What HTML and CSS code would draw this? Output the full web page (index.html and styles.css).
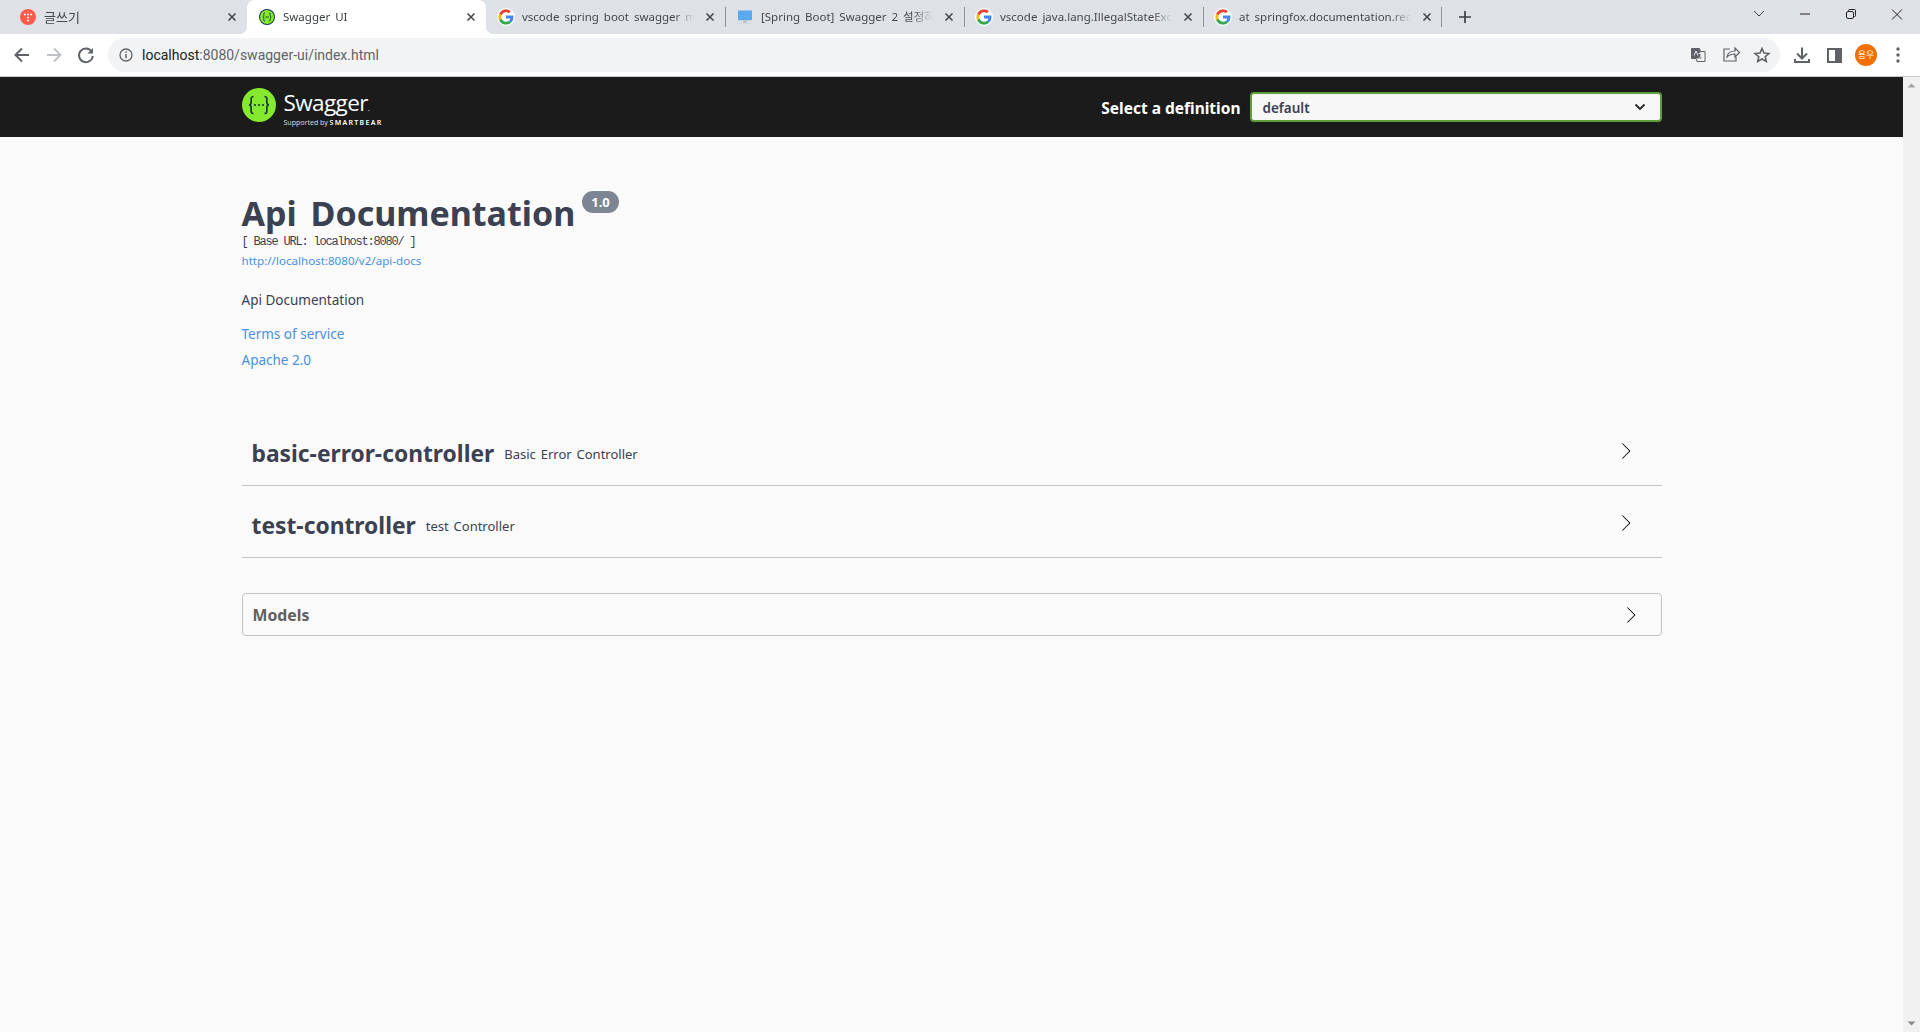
FILE: index.html
```html
<!DOCTYPE html>
<html lang="en">
<head>
    <meta charset="UTF-8">
    <title>Swagger UI</title>
    <link rel="stylesheet" href="styles.css">
</head>
<body>
    <div class="tabstrip">
        <div class="tab">
            <span class="fav fav-tistory">
                <svg width="16" height="16" viewBox="0 0 16 16"><circle cx="8" cy="8" r="8" fill="#ff5a4a"/><g fill="#fff"><circle cx="4.8" cy="5.5" r="1"/><circle cx="8" cy="5.5" r="1"/><circle cx="11.2" cy="5.5" r="1"/><circle cx="8" cy="8.5" r="1"/><circle cx="8" cy="11.5" r="1"/></g></svg>
            </span>
            <span class="tab-title tab-title-ko">글쓰기</span>
            <svg class="tab-close" width="10" height="10" viewBox="0 0 10 10"><path d="M1.5 1.5l7 7M8.5 1.5l-7 7" stroke="#45484d" stroke-width="1.6"/></svg>
        </div>
        <div class="tab active">
            <span class="fav">
                <svg width="16" height="16" viewBox="0 0 16 16"><circle cx="8" cy="8" r="8" fill="#173647"/><circle cx="8" cy="8" r="7" fill="#85ea2d"/><path d="M6 3.8c-1.6 0-1.2 1.700-1.200 2.800 0 .8-.6 1.400-1 1.400.4 0 1 .6 1 1.400 0 1.100-.4 2.800 1.200 2.800M10 3.800c1.600 0 1.200 1.700 1.200 2.800 0 .8.6 1.400 1 1.400-.4 0-1 .6-1 1.400 0 1.100.4 2.800-1.200 2.800M6.200 8h3.600" fill="none" stroke="#173647" stroke-width=".9"/></svg>
            </span>
            <span class="tab-title">Swagger UI</span>
            <svg class="tab-close" width="10" height="10" viewBox="0 0 10 10"><path d="M1.5 1.5l7 7M8.5 1.5l-7 7" stroke="#45484d" stroke-width="1.6"/></svg>
        </div>
        <div class="tab sep">
            <span class="fav fav-google">
                <svg width="16" height="16" viewBox="0 0 48 48"><path fill="#ea4335" d="M24 9.500c3.900 0 6.700 1.700 8.300 3.100l6.100-5.900C34.600 3.200 29.800 1 24 1 15 1 7.300 6.200 3.500 13.700l7.100 5.500C12.400 13.600 17.700 9.500 24 9.500z"/><path fill="#4285f4" d="M46.500 24.500c0-1.900-.2-3.300-.5-4.700H24v8.500h12.900c-.3 2.100-1.700 5.300-4.700 7.400l6.900 5.300c4.600-4.200 7.400-10.400 7.400-16.500z"/><path fill="#fbbc05" d="M10.600 28.800c-.5-1.500-.8-3.100-.8-4.800s.3-3.300.8-4.800l-7.100-5.500C2 16.700 1 20.200 1 24s1 7.300 2.500 10.300l7.100-5.500z"/><path fill="#34a853" d="M24 47c6.200 0 11.400-2 15.100-5.600l-6.900-5.300c-2 1.300-4.500 2.300-8.200 2.300-6.300 0-11.600-4.100-13.400-9.700l-7.100 5.500C7.300 41.800 15 47 24 47z"/></svg>
            </span>
            <span class="tab-title">vscode spring boot swagger maven</span>
            <svg class="tab-close" width="10" height="10" viewBox="0 0 10 10"><path d="M1.500 1.500l7 7M8.500 1.500l-7 7" stroke="#45484d" stroke-width="1.6"/></svg>
        </div>
        <div class="tab sep">
            <span class="fav">
                <svg width="16" height="16" viewBox="0 0 16 16"><rect x="1" y="1.500" width="14" height="9.500" fill="#5aa9ec"/><rect x="1" y="11" width="14" height="1" fill="#c5d3de"/><rect x="6" y="12" width="4" height="1.500" fill="#aab7c2"/><rect x="1" y="14" width="14" height="1" fill="#d0d7dd"/></svg>
            </span>
            <span class="tab-title">[Spring Boot] Swagger 2 설정하기</span>
            <svg class="tab-close" width="10" height="10" viewBox="0 0 10 10"><path d="M1.500 1.500l7 7M8.500 1.500l-7 7" stroke="#45484d" stroke-width="1.6"/></svg>
        </div>
        <div class="tab sep">
            <span class="fav fav-google">
                <svg width="16" height="16" viewBox="0 0 48 48"><path fill="#ea4335" d="M24 9.500c3.900 0 6.700 1.700 8.300 3.100l6.100-5.900C34.600 3.200 29.800 1 24 1 15 1 7.300 6.200 3.500 13.700l7.100 5.500C12.400 13.600 17.700 9.500 24 9.500z"/><path fill="#4285f4" d="M46.500 24.500c0-1.900-.2-3.300-.5-4.700H24v8.500h12.900c-.3 2.100-1.700 5.300-4.700 7.400l6.900 5.300c4.600-4.200 7.400-10.400 7.400-16.500z"/><path fill="#fbbc05" d="M10.600 28.800c-.5-1.500-.8-3.100-.8-4.800s.3-3.300.8-4.800l-7.100-5.500C2 16.700 1 20.200 1 24s1 7.300 2.500 10.300l7.100-5.500z"/><path fill="#34a853" d="M24 47c6.200 0 11.400-2 15.100-5.600l-6.900-5.300c-2 1.300-4.500 2.300-8.200 2.300-6.300 0-11.600-4.100-13.400-9.700l-7.100 5.500C7.300 41.800 15 47 24 47z"/></svg>
            </span>
            <span class="tab-title">vscode java.lang.IllegalStateException</span>
            <svg class="tab-close" width="10" height="10" viewBox="0 0 10 10"><path d="M1.500 1.500l7 7M8.500 1.500l-7 7" stroke="#45484d" stroke-width="1.6"/></svg>
        </div>
        <div class="tab sep sep-end">
            <span class="fav fav-google">
                <svg width="16" height="16" viewBox="0 0 48 48"><path fill="#ea4335" d="M24 9.500c3.900 0 6.700 1.700 8.300 3.100l6.100-5.900C34.600 3.200 29.800 1 24 1 15 1 7.300 6.200 3.500 13.700l7.100 5.500C12.400 13.600 17.700 9.500 24 9.500z"/><path fill="#4285f4" d="M46.500 24.500c0-1.900-.2-3.300-.5-4.700H24v8.500h12.900c-.3 2.100-1.700 5.300-4.700 7.400l6.900 5.300c4.600-4.200 7.400-10.400 7.400-16.500z"/><path fill="#fbbc05" d="M10.600 28.800c-.5-1.500-.8-3.100-.8-4.800s.3-3.300.8-4.800l-7.100-5.500C2 16.700 1 20.200 1 24s1 7.300 2.500 10.300l7.100-5.500z"/><path fill="#34a853" d="M24 47c6.200 0 11.400-2 15.100-5.600l-6.900-5.300c-2 1.300-4.500 2.300-8.200 2.300-6.300 0-11.600-4.100-13.400-9.700l-7.100 5.500C7.300 41.800 15 47 24 47z"/></svg>
            </span>
            <span class="tab-title">at springfox.documentation.request</span>
            <svg class="tab-close" width="10" height="10" viewBox="0 0 10 10"><path d="M1.500 1.500l7 7M8.500 1.500l-7 7" stroke="#45484d" stroke-width="1.6"/></svg>
        </div>
        <svg class="new-tab" width="12" height="12" viewBox="0 0 12 12"><path d="M6 0v12M0 6h12" stroke="#3c4043" stroke-width="1.700"/></svg>
        <div class="win-controls">
            <svg width="46" height="28" viewBox="0 0 46 28"><path d="M18 11l5 5 5-5" fill="none" stroke="#3c4043" stroke-width="1"/></svg>
            <svg width="46" height="28" viewBox="0 0 46 28"><path d="M18 14h10" stroke="#222" stroke-width="1"/></svg>
            <svg width="46" height="28" viewBox="0 0 46 28"><rect x="18.500" y="11.500" width="7" height="7" rx="1.500" fill="none" stroke="#222"/><path d="M20.500 11.500v-1a1 1 0 0 1 1-1h5a1 1 0 0 1 1 1v5a1 1 0 0 1-1 1h-1" fill="none" stroke="#222"/></svg>
            <svg width="46" height="28" viewBox="0 0 46 28"><path d="M18 9.500l10 10M28 9.500l-10 10" stroke="#222" stroke-width="1"/></svg>
        </div>
    </div>

    <div class="toolbar">
        <svg class="tool-btn" width="32" height="32" viewBox="0 0 32 32"><path d="M23 16H10M16 9.500L9.500 16l6.500 6.500" fill="none" stroke="#5f6368" stroke-width="2"/></svg>
        <svg class="tool-btn" width="32" height="32" viewBox="0 0 32 32"><path d="M9 16h13M16 9.500l6.500 6.500-6.500 6.500" fill="none" stroke="#bdc1c6" stroke-width="2"/></svg>
        <svg class="tool-btn" width="32" height="32" viewBox="0 0 32 32"><path d="M21.700 12.500A6.900 6.900 0 1 0 22.800 17" fill="none" stroke="#5f6368" stroke-width="2"/><path d="M23 9v5.500h-5.500z" fill="#5f6368"/></svg>
        <div class="omnibox">
            <svg class="omni-info" width="14" height="14" viewBox="0 0 14 14"><circle cx="7" cy="7" r="6" fill="none" stroke="#5f6368" stroke-width="1.300"/><path d="M7 6v4.200" stroke="#5f6368" stroke-width="1.500"/><circle cx="7" cy="4.100" r=".9" fill="#5f6368"/></svg>
            <span class="url"><span class="url-host">localhost</span>:8080/swagger-ui/index.html</span>
            <div class="omni-icons">
                <svg width="32" height="32" viewBox="0 0 32 32"><path d="M9.500 9.500h8l1 3h4.500v10h-8l-1-3H9.500z" fill="none" stroke="#5f6368" stroke-width="1"/><path d="M9.500 9.500h8l2 10H9.500z" fill="#5f6368"/><path d="M12 16.500l2-4.500 2 4.500M16.500 14.500h5M19 14.500c0 3-1.500 5-3 6" fill="none" stroke="#f1f3f4" stroke-width=".9"/></svg>
                <svg width="32" height="32" viewBox="0 0 32 32"><path d="M16 10H10v12h12v-4" fill="none" stroke="#5f6368" stroke-width="1.200"/><path d="M13 18c.5-4 3.500-6 8-6V9l4.500 4.500L21 18v-3c-3.500 0-6 1-8 3z" fill="none" stroke="#5f6368" stroke-width="1.200"/></svg>
                <svg width="32" height="32" viewBox="0 0 32 32"><path d="M16 9.500l2 4.500 4.900.5-3.700 3.200 1.100 4.800-4.300-2.500-4.300 2.500 1.100-4.800-3.700-3.200 4.900-.5z" fill="none" stroke="#5f6368" stroke-width="1.600"/></svg>
            </div>
        </div>
        <svg class="tool-btn" width="32" height="32" viewBox="0 0 32 32"><path d="M16 8.500v11M11 14.500l5 5 5-5M9 20v3h14v-3" fill="none" stroke="#5f6368" stroke-width="2"/></svg>
        <svg class="tool-btn" width="32" height="32" viewBox="0 0 32 32"><rect x="10" y="10" width="13" height="13" fill="none" stroke="#5f6368" stroke-width="2"/><rect x="17" y="10" width="6" height="13" fill="#5f6368"/></svg>
        <span class="avatar-wrap"><span class="avatar">용우</span></span>
        <svg class="tool-btn" width="32" height="32" viewBox="0 0 32 32"><circle cx="16" cy="10" r="1.700" fill="#5f6368"/><circle cx="16" cy="16" r="1.700" fill="#5f6368"/><circle cx="16" cy="22" r="1.700" fill="#5f6368"/></svg>
    </div>

    <div class="viewport">
        <div class="page">
            <div class="topbar">
                <div class="wrapper topbar-inner">
                    <div class="logo">
                        <svg width="34" height="34" viewBox="0 0 34 34"><circle cx="17" cy="17" r="17" fill="#85ea2d"/><path d="M11.500 8.500c-3 0-2.300 3-2.300 5.300 0 1.800-1.100 3.200-2.200 3.200 1.100 0 2.200 1.400 2.200 3.200 0 2.300-.7 5.300 2.300 5.300M22.500 8.500c3 0 2.300 3 2.300 5.300 0 1.800 1.100 3.200 2.200 3.200-1.100 0-2.200 1.400-2.200 3.200 0 2.300.7 5.300-2.300 5.300" fill="none" stroke="#173647" stroke-width="1.700"/><circle cx="13" cy="17" r="1.100" fill="#173647"/><circle cx="17" cy="17" r="1.100" fill="#173647"/><circle cx="21" cy="17" r="1.100" fill="#173647"/></svg>
                        <div class="logo-text">
                            <div class="logo-name">Swagger<span class="logo-tm">.</span></div>
                            <div class="logo-sub">Supported by <b>SMARTBEAR</b></div>
                        </div>
                    </div>
                    <div class="definition">
                        <span class="definition-label">Select a definition</span>
                        <div class="definition-select">
                            <span class="definition-value">default</span>
                            <svg width="12" height="8" viewBox="0 0 12 8"><path d="M1.500 1.500L6 6l4.500-4.500" fill="none" stroke="#222" stroke-width="1.800"/></svg>
                        </div>
                    </div>
                </div>
            </div>

            <div class="wrapper">
                <div class="info">
                    <div class="title-row">
                        <h2 class="title">Api Documentation</h2>
                        <span class="version">1.0</span>
                    </div>
                    <div class="base-url">[ Base URL: localhost:8080/ ]</div>
                    <a class="link link-small" href="#">http://localhost:8080/v2/api-docs</a>
                    <p class="description">Api Documentation</p>
                    <a class="link" href="#">Terms of service</a>
                    <a class="link link-license" href="#">Apache 2.0</a>
                </div>

                <div class="tag-row">
                    <span class="tag-name">basic-error-controller</span>
                    <span class="tag-desc">Basic Error Controller</span>
                    <svg class="arrow" width="20" height="20" viewBox="0 0 20 20"><path d="M13.250 10L6.109 2.859 6.700 2.200 14.500 10l-7.800 7.800-.591-.659z"/></svg>
                </div>
                <div class="tag-row">
                    <span class="tag-name">test-controller</span>
                    <span class="tag-desc">test Controller</span>
                    <svg class="arrow" width="20" height="20" viewBox="0 0 20 20"><path d="M13.250 10L6.109 2.859 6.700 2.200 14.500 10l-7.800 7.800-.591-.659z"/></svg>
                </div>

                <div class="models">
                    <span class="models-title">Models</span>
                    <svg class="arrow" width="20" height="20" viewBox="0 0 20 20"><path d="M13.250 10L6.109 2.859 6.700 2.200 14.500 10l-7.800 7.800-.591-.659z"/></svg>
                </div>
            </div>
        </div>

        <div class="scrollbar">
            <svg width="17" height="17" viewBox="0 0 17 17"><path d="M4.500 10.500l4-4 4 4z" fill="#a3a3a3"/></svg>
            <svg width="17" height="17" viewBox="0 0 17 17"><path d="M4.500 6.500l4 4 4-4z" fill="#8a8a8a"/></svg>
        </div>
    </div>
</body>
</html>
```

FILE: styles.css
```css
* {
    box-sizing: border-box;
}

html,
body {
    height: 100%;
}

body {
    margin: 0;
    display: flex;
    flex-direction: column;
    overflow: hidden;
    font-family: "Noto Sans", "Noto Sans CJK KR", sans-serif;
    color: #3b4151;
    background-color: #fafafa;
}

/* browser tab strip */
.tabstrip {
    display: flex;
    align-items: center;
    height: 34px;
    padding-left: 8px;
    background-color: #dee1e6;
}

.tab {
    position: relative;
    display: flex;
    align-items: center;
    flex: none;
    width: 239px;
    height: 34px;
    padding: 0 10px 0 12px;
    font-size: 11.500px;
    color: #45484d;
}

.tab.active {
    background-color: #fff;
    border-radius: 8px 8px 0 0;
    color: #3c4043;
}

.tab.active::before,
.tab.active::after {
    content: "";
    position: absolute;
    bottom: 0;
    width: 8px;
    height: 8px;
}

.tab.active::before {
    left: -8px;
    background: radial-gradient(circle at 0 0, transparent 8px, #fff 8.500px);
}

.tab.active::after {
    right: -8px;
    background: radial-gradient(circle at 100% 0, transparent 8px, #fff 8.500px);
}

.tab.sep::before {
    content: "";
    position: absolute;
    left: 0;
    top: 7px;
    width: 1px;
    height: 20px;
    background-color: #8f9296;
}

.tab.sep-end::after {
    content: "";
    position: absolute;
    right: 0;
    top: 7px;
    width: 1px;
    height: 20px;
    background-color: #8f9296;
}

.tab.active + .tab.sep::before {
    display: none;
}

.fav {
    display: flex;
    flex: none;
    width: 16px;
    height: 16px;
    margin-right: 8px;
}

.fav-google {
    border-radius: 50%;
    background-color: #fff;
    outline: 1px solid #fff;
}

.tab-title {
    flex: none;
    width: 172px;
    margin-bottom: 2px;
    overflow: hidden;
    white-space: nowrap;
    word-spacing: 2px;
    -webkit-mask-image: linear-gradient(to right, #000 152px, transparent 172px);
}

.tab-title-ko {
    font-size: 13px;
}

.tab-close {
    flex: none;
    margin-left: auto;
}

.new-tab {
    margin-left: 17px;
}

.win-controls {
    display: flex;
    margin-left: auto;
    margin-right: 0;
    align-self: flex-start;
}

/* address bar row */
.toolbar {
    display: flex;
    align-items: center;
    height: 43px;
    padding: 0 6px 1px 6px;
    background-color: #fff;
    border-bottom: 1px solid #c9cacc;
}

.omnibox {
    display: flex;
    align-items: center;
    flex: 1;
    height: 34px;
    margin: 0 6px 0 6px;
    padding-left: 11px;
    border-radius: 17px;
    background-color: #f1f3f4;
}

.omni-info {
    margin-right: 9px;
}

.url {
    font-family: Roboto, sans-serif;
    font-size: 14px;
    color: #5f6368;
}

.url-host {
    color: #202124;
}

.omni-icons {
    display: flex;
    margin-left: auto;
    margin-right: 2px;
}

.avatar-wrap {
    display: flex;
    justify-content: center;
    align-items: center;
    width: 32px;
}

.avatar {
    display: flex;
    justify-content: center;
    align-items: center;
    width: 22px;
    height: 22px;
    border-radius: 50%;
    background-color: #f36f00;
    color: #fff;
    font-size: 9px;
}

/* page area */
.viewport {
    display: flex;
    flex: 1;
    min-height: 0;
}

.page {
    flex: 1;
}

.scrollbar {
    display: flex;
    flex-direction: column;
    justify-content: space-between;
    width: 17px;
    background-color: #f1f1f1;
}

.wrapper {
    max-width: 1460px;
    margin: 0 auto;
    padding: 0 20px;
}

.topbar {
    height: 60px;
    background-color: #1b1b1b;
}

.topbar-inner {
    display: flex;
    align-items: center;
    justify-content: space-between;
    height: 60px;
}

.logo {
    display: flex;
    align-items: center;
    margin-bottom: 5px;
}

.logo-text {
    margin: 9px 0 0 8px;
    color: #fff;
}

.logo-name {
    font-family: "Open Sans", sans-serif;
    font-size: 22.500px;
    line-height: 21px;
    letter-spacing: -0.600px;
}

.logo-tm {
    font-size: 8px;
}

.logo-sub {
    font-size: 7px;
    line-height: 9px;
    color: #d8d8d8;
}

.logo-sub b {
    font-weight: 600;
    letter-spacing: 1.300px;
    color: #fff;
}

.definition {
    display: flex;
    align-items: center;
}

.definition-label {
    margin-right: 9px;
    padding-top: 2px;
    font-size: 15.500px;
    font-weight: 700;
    color: #fff;
}

.definition-select {
    display: flex;
    align-items: center;
    justify-content: space-between;
    width: 412px;
    height: 30px;
    padding: 0 14px 0 11px;
    border: 2px solid #5c9f3c;
    border-radius: 4px;
    background-color: #f7f7f7;
    font-size: 13.500px;
    font-weight: 600;
    color: #3b4151;
}

.definition-value {
    padding-top: 2px;
}

.info {
    padding-top: 50px;
    height: 277px;
}

.title-row {
    display: flex;
    align-items: flex-start;
}

.title {
    margin: 0;
    font-size: 34px;
    line-height: 52px;
    word-spacing: 5px;
    font-weight: 700;
    color: #3b4151;
}

.version {
    margin: 4px 0 0 7px;
    padding: 0 9px;
    height: 22px;
    line-height: 22px;
    border-radius: 11px;
    background-color: #7d8492;
    color: #fff;
    font-size: 13px;
    font-weight: 700;
}

.base-url {
    margin-top: -5px;
    font-family: "Liberation Mono", monospace;
    font-size: 12px;
    line-height: 17px;
    letter-spacing: -1.200px;
}

.link {
    display: block;
    font-size: 13.500px;
    line-height: 20px;
    color: #4990e2;
    text-decoration: none;
}

.link-small {
    font-size: 11.600px;
}

.link-license {
    margin-top: 6px;
}

.description {
    margin: 19px 0 14px;
    font-size: 13.500px;
    line-height: 20px;
}

.tag-row {
    display: flex;
    align-items: center;
    height: 72px;
    padding: 8px 26px 0 10px;
    border-bottom: 1px solid #c5c6c8;
}

.tag-name {
    font-size: 22.800px;
    font-weight: 700;
    color: #3b4151;
}

.tag-desc {
    margin-left: 10px;
    padding-top: 1px;
    font-size: 13px;
    word-spacing: 1.500px;
}

.arrow {
    margin-left: auto;
    margin-top: -6px;
}

.models {
    display: flex;
    align-items: center;
    height: 43px;
    margin-top: 35px;
    padding: 0 20px 0 10px;
    border: 1px solid #c3c4c6;
    border-radius: 4px;
}

.models-title {
    font-size: 15.800px;
    font-weight: 700;
    color: #606060;
}

.models .arrow {
    margin-top: 0;
}
```
